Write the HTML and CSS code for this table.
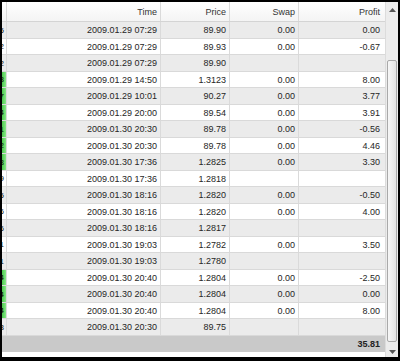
FILE: index.html
```html
<!DOCTYPE html>
<html>
<head>
<meta charset="utf-8">
<link rel="stylesheet" href="styles.css">
</head>
<body>
<div class="frame">
  <div class="grid">
    <div class="row head">
      <div class="c c0"></div>
      <div class="c">Time</div>
      <div class="c">Price</div>
      <div class="c">Swap</div>
      <div class="c">Profit</div>
    </div>
    <div class="row"><div class="c c0">5</div><div class="c">2009.01.29 07:29</div><div class="c">89.90</div><div class="c">0.00</div><div class="c">0.00</div></div>
    <div class="row"><div class="c c0">2</div><div class="c">2009.01.29 07:29</div><div class="c">89.93</div><div class="c">0.00</div><div class="c">-0.67</div></div>
    <div class="row"><div class="c c0">2</div><div class="c">2009.01.29 07:29</div><div class="c">89.90</div><div class="c"></div><div class="c"></div></div>
    <div class="row"><div class="c c0 g">3</div><div class="c">2009.01.29 14:50</div><div class="c">1.3123</div><div class="c">0.00</div><div class="c">8.00</div></div>
    <div class="row"><div class="c c0 g">7</div><div class="c">2009.01.29 10:01</div><div class="c">90.27</div><div class="c">0.00</div><div class="c">3.77</div></div>
    <div class="row"><div class="c c0 g">4</div><div class="c">2009.01.29 20:00</div><div class="c">89.54</div><div class="c">0.00</div><div class="c">3.91</div></div>
    <div class="row"><div class="c c0 g">1</div><div class="c">2009.01.30 20:30</div><div class="c">89.78</div><div class="c">0.00</div><div class="c">-0.56</div></div>
    <div class="row"><div class="c c0 g">2</div><div class="c">2009.01.30 20:30</div><div class="c">89.78</div><div class="c">0.00</div><div class="c">4.46</div></div>
    <div class="row"><div class="c c0 g">8</div><div class="c">2009.01.30 17:36</div><div class="c">1.2825</div><div class="c">0.00</div><div class="c">3.30</div></div>
    <div class="row"><div class="c c0">9</div><div class="c">2009.01.30 17:36</div><div class="c">1.2818</div><div class="c"></div><div class="c"></div></div>
    <div class="row"><div class="c c0">5</div><div class="c">2009.01.30 18:16</div><div class="c">1.2820</div><div class="c">0.00</div><div class="c">-0.50</div></div>
    <div class="row"><div class="c c0">6</div><div class="c">2009.01.30 18:16</div><div class="c">1.2820</div><div class="c">0.00</div><div class="c">4.00</div></div>
    <div class="row"><div class="c c0">6</div><div class="c">2009.01.30 18:16</div><div class="c">1.2817</div><div class="c"></div><div class="c"></div></div>
    <div class="row"><div class="c c0">1</div><div class="c">2009.01.30 19:03</div><div class="c">1.2782</div><div class="c">0.00</div><div class="c">3.50</div></div>
    <div class="row"><div class="c c0">1</div><div class="c">2009.01.30 19:03</div><div class="c">1.2780</div><div class="c"></div><div class="c"></div></div>
    <div class="row"><div class="c c0 g">4</div><div class="c">2009.01.30 20:40</div><div class="c">1.2804</div><div class="c">0.00</div><div class="c">-2.50</div></div>
    <div class="row"><div class="c c0 g">4</div><div class="c">2009.01.30 20:40</div><div class="c">1.2804</div><div class="c">0.00</div><div class="c">0.00</div></div>
    <div class="row"><div class="c c0 g">4</div><div class="c">2009.01.30 20:40</div><div class="c">1.2804</div><div class="c">0.00</div><div class="c">8.00</div></div>
    <div class="row"><div class="c c0">3</div><div class="c">2009.01.30 20:30</div><div class="c">89.75</div><div class="c"></div><div class="c"></div></div>
    <div class="total"><span>35.81</span></div>
    <div class="fill"></div>
  </div>
  <div class="scroll">
    <div class="arrow up"><svg width="7" height="4" viewBox="0 0 7 4"><path d="M0 4 L3.5 0 L7 4 Z" fill="#555"/></svg></div>
    <div class="track"><div class="thumb"></div></div>
    <div class="arrow down"><svg width="7" height="4" viewBox="0 0 7 4"><path d="M0 0 L3.5 4 L7 0 Z" fill="#555"/></svg></div>
  </div>
</div>
</body>
</html>
```
FILE: styles.css
```css
html, body {
  margin: 0;
  padding: 0;
  background: #000;
}
.frame {
  width: 396px;
  height: 355px;
  border-style: solid;
  border-color: #000;
  border-width: 2px 2px 4px 2px;
  background: #fff;
  display: flex;
  font-family: "Liberation Sans", Arial, sans-serif;
  font-size: 9px;
  color: #262626;
  overflow: hidden;
}
.grid {
  width: 383px;
  display: flex;
  flex-direction: column;
}
.row {
  display: grid;
  grid-template-columns: 5px 154px 69px 69px 86px;
  height: 17px;
  box-sizing: border-box;
  border-bottom: 1px solid #d9d9d9;
}
.row:nth-child(even) {
  background: #ebebeb;
}
.row:nth-child(odd) {
  background: #fff;
  height: 16px;
}
.row.head {
  height: 20px;
  background: linear-gradient(#ffffff, #f4f4f4);
  border-bottom: 1px solid #d4d4d4;
  color: #333;
}
.c {
  box-sizing: border-box;
  border-right: 1px solid #dadada;
  text-align: right;
  padding-right: 3px;
  display: flex;
  align-items: center;
  justify-content: flex-end;
  white-space: nowrap;
  overflow: hidden;
}
.row .c:last-child {
  padding-right: 5px;
  border-right: none;
}
.c0 {
  padding-right: 2px;
  color: #111;
  font-size: 8px;
}
.c0.g {
  background: linear-gradient(to right, #4fc94f, #86e886);
}
.total {
  height: 16px;
  background: #c9c9c9;
  display: flex;
  align-items: center;
  justify-content: flex-end;
  padding-right: 5px;
  font-weight: bold;
  color: #222;
}
.fill {
  flex: 1;
  background: #fff;
}
.scroll {
  width: 13px;
  box-sizing: border-box;
  background: #ececec;
  border-left: 1px solid #dcdcdc;
  display: flex;
  flex-direction: column;
}
.arrow {
  display: flex;
  justify-content: center;
}
.arrow.up {
  height: 17px;
  align-items: center;
  padding-bottom: 2px;
  box-sizing: border-box;
}
.arrow.down {
  height: 15px;
  align-items: flex-end;
  padding-bottom: 3px;
  box-sizing: border-box;
}
.track {
  flex: 1;
  padding-top: 41px;
  padding-left: 1px;
}
.thumb {
  width: 10px;
  height: 282px;
  box-sizing: border-box;
  border: 1px solid #a9a9a9;
  border-radius: 2px;
  background: linear-gradient(to right, #f7f7f7, #e3e3e3);
}
```
